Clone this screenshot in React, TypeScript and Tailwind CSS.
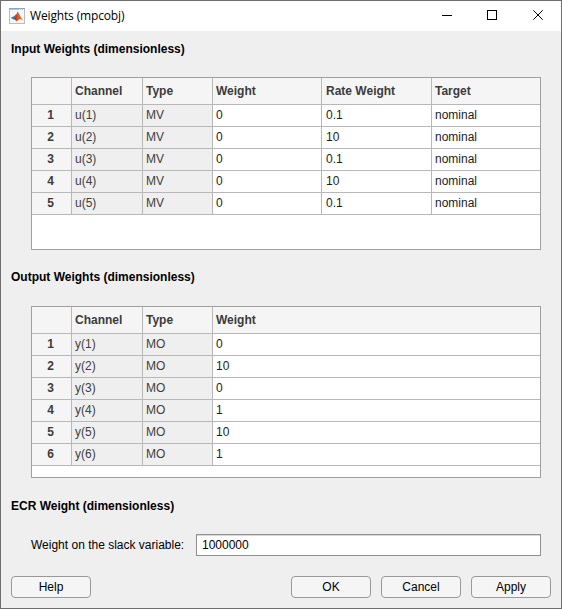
import React from "react";

const inputRows = [
  ["u(1)", "MV", "0", "0.1", "nominal"],
  ["u(2)", "MV", "0", "10", "nominal"],
  ["u(3)", "MV", "0", "0.1", "nominal"],
  ["u(4)", "MV", "0", "10", "nominal"],
  ["u(5)", "MV", "0", "0.1", "nominal"],
];

const outputRows = [
  ["y(1)", "MO", "0"],
  ["y(2)", "MO", "10"],
  ["y(3)", "MO", "0"],
  ["y(4)", "MO", "1"],
  ["y(5)", "MO", "10"],
  ["y(6)", "MO", "1"],
];

type GridProps = { columns: string; headers: string[]; rows: string[][]; height: string };

function WeightGrid({ columns, headers, rows, height }: GridProps) {
  return (
    <div className={`ml-[30px] w-[510px] border border-[#a0a0a0] bg-white ${height}`}>
      <div className={`grid h-[27px] border-b border-[#b8b8b8] bg-[#f5f5f5] font-bold text-[#3c3c3c] ${columns}`}>
        <div className="border-r border-[#b8b8b8]" />
        {headers.map((h, i) => (
          <div
            key={h}
            className={`leading-[26px] ${i === 3 ? "pl-1" : "pl-[3px]"} ${
              i < headers.length - 1 ? "border-r border-[#b8b8b8]" : ""
            }`}
          >
            {h}
          </div>
        ))}
      </div>
      {rows.map((row, r) => (
        <div key={r} className={`grid h-[22px] border-b border-[#b8b8b8] leading-[20px] ${columns}`}>
          <div className="border-r border-[#b8b8b8] bg-[#f5f5f5] pr-[2px] text-center font-bold text-[#3c3c3c]">
            {r + 1}
          </div>
          {row.map((cell, i) => (
            <div
              key={i}
              className={`${i === 3 ? "pl-1" : "pl-[3px]"} ${
                i < row.length - 1 ? "border-r border-[#b8b8b8]" : ""
              } ${i < 2 ? "bg-[#efefef] text-[#404040]" : "text-[#1c1c1c]"}`}
            >
              {cell}
            </div>
          ))}
        </div>
      ))}
    </div>
  );
}

function Heading({ children }: { children: React.ReactNode }) {
  return <h2 className="h-4 font-bold leading-4 text-black">{children}</h2>;
}

function PushButton({ label }: { label: string }) {
  return (
    <button className="h-[22px] w-20 rounded-[4px] border border-[#999999] bg-[#f5f5f5] text-center leading-5 text-black">
      {label}
    </button>
  );
}

function AppIcon() {
  return (
    <svg width="16" height="16" viewBox="0 0 16 16">
      <defs>
        <linearGradient id="peak" x1="0" y1="0" x2="1" y2="0">
          <stop offset="0" stopColor="#b5381a" />
          <stop offset="0.4" stopColor="#e2601c" />
          <stop offset="1" stopColor="#d9701f" />
        </linearGradient>
      </defs>
      <rect x="0.5" y="0.5" width="15" height="15" fill="#f6f6f6" stroke="#b4bcc6" />
      <rect x="0" y="0" width="16" height="1" fill="#8ba6c1" />
      <rect x="1" y="1" width="14" height="1" fill="#a9c6e0" />
      <rect x="10" y="1" width="1" height="1" fill="#f0f5fa" />
      <rect x="12" y="1" width="1" height="1" fill="#f0f5fa" />
      <rect x="14" y="1" width="1" height="1" fill="#f0f5fa" />
      <path d="M1.8 9.8 L5 8.3 L7.4 6 L6.6 9.4 L4.6 11.4 Z" fill="#3478b4" />
      <path d="M4.6 11.4 L6.3 9.4 L8.6 4 L7.6 12.8 L6.2 11.4 Z" fill="#7d2d22" />
      <path d="M8.6 3.6 C10 5.2 11.6 9.8 14.2 12.4 L11.6 11 C10 10.8 9 12.8 7.2 13.4 L6.2 11.4 C7.5 9.5 7.6 5 8.6 3.6 Z" fill="url(#peak)" />
    </svg>
  );
}

export default function App() {
  return (
    <div className="flex h-[609px] w-[562px] flex-col border border-[#6e6e6e] bg-[#efefef] font-['Liberation_Sans',Arial,sans-serif] text-[12px]">
      <header className="flex h-[30px] shrink-0 items-center bg-white pl-2">
        <AppIcon />
        <span className="ml-[5px] font-['Open_Sans','Noto_Sans',sans-serif] text-[12px] leading-4 tracking-[-0.15px] text-black">
          Weights (mpcobj)
        </span>
        <svg className="mb-[2px] ml-auto mr-4" width="103" height="12" viewBox="0 0 103 12" fill="none" stroke="#000" strokeWidth="1">
          <path d="M0 6.5 H10" />
          <rect x="45.5" y="1.5" width="9" height="9" />
          <path d="M91.3 1.3 L100.7 10.7 M100.7 1.3 L91.3 10.7" />
        </svg>
      </header>

      <main className="flex flex-col">
        <div className="pl-[10px] pt-[10px]">
          <Heading>Input Weights (dimensionless)</Heading>
        </div>
        <div className="pt-5">
          <WeightGrid
            columns="grid-cols-[40px_71px_70px_109px_110px_108px]"
            headers={["Channel", "Type", "Weight", "Rate Weight", "Target"]}
            rows={inputRows}
            height="h-[173px]"
          />
        </div>
        <div className="pl-[10px] pt-[19px]">
          <Heading>Output Weights (dimensionless)</Heading>
        </div>
        <div className="pt-[21px]">
          <WeightGrid
            columns="grid-cols-[40px_71px_70px_327px]"
            headers={["Channel", "Type", "Weight"]}
            rows={outputRows}
            height="h-[172px]"
          />
        </div>
        <div className="pl-[10px] pt-5">
          <Heading>ECR Weight (dimensionless)</Heading>
        </div>
        <div className="flex pl-[30px] pt-5">
          <label htmlFor="ecr" className="w-[165px] leading-[22px] text-black">
            Weight on the slack variable:
          </label>
          <input
            id="ecr"
            defaultValue="1000000"
            className="h-[22px] w-[345px] border border-[#919191] bg-white pl-[5px] text-black shadow-[inset_0_1px_0_#d8d8d8] outline-none"
          />
        </div>
        <div className="flex gap-[10px] pl-[10px] pt-5">
          <PushButton label="Help" />
          <div className="w-[180px]" />
          <PushButton label="OK" />
          <PushButton label="Cancel" />
          <PushButton label="Apply" />
        </div>
      </main>
    </div>
  );
}
